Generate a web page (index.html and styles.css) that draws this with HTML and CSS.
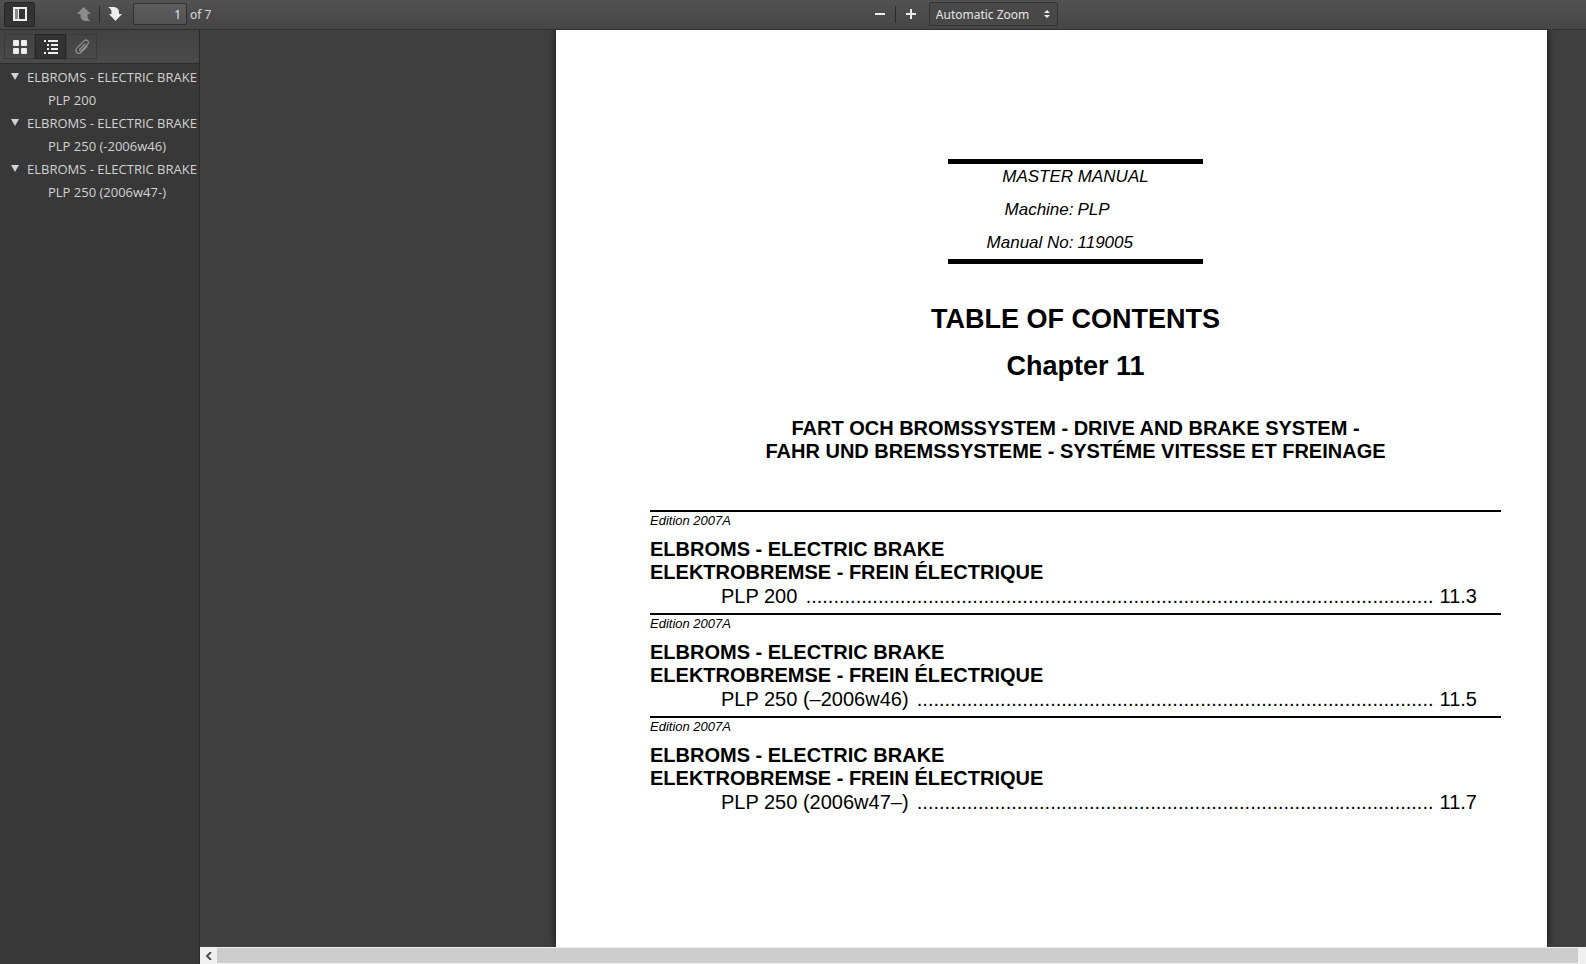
FILE: index.html
```
<!DOCTYPE html>
<html lang="en">
<head>
    <meta charset="UTF-8">
    <meta name="viewport" content="width=device-width, initial-scale=1.0">
    <title>Master Manual - Chapter 11</title>
    <link rel="stylesheet" href="styles.css">
</head>
<body>
    <header class="toolbar">
        <div class="toolbar-left">
            <button class="tool-button toggled sidebar-toggle" aria-label="Toggle Sidebar">
                <svg width="16" height="16" viewBox="0 0 16 16"><path fill="#eee" fill-rule="evenodd" d="M1 1h14v14H1zM3 3v10h3V3zM7 3v10h6V3z"/><path fill="#8a8a8a" d="M3 3h3v10H3z"/></svg>
            </button>
            <div class="page-buttons">
                <button class="plain-button" aria-label="Previous Page" disabled>
                    <svg width="16" height="16" viewBox="0 0 16 16"><path fill="#8c8c8c" d="M7.5 1L15 8h-3.500v2q0 3.500 3.500 5H9q-4.500-1-4.500-5V8H1z"/></svg>
                </button>
                <span class="separator"></span>
                <button class="plain-button" aria-label="Next Page">
                    <svg width="16" height="16" viewBox="0 0 16 16"><path fill="#eee" d="M8.5 15L15 8h-3V6q0-4-4.500-5H1q3.500 1.500 3.500 5v2H2z"/></svg>
                </button>
            </div>
            <input class="page-number" id="page-number" type="text" value="1" aria-label="Page">
            <label class="page-count" for="page-number">of 7</label>
        </div>
        <div class="toolbar-middle">
            <button class="plain-button" aria-label="Zoom Out">
                <svg width="16" height="16" viewBox="0 0 16 16"><path fill="#eee" d="M3 7h10v2H3z"/></svg>
            </button>
            <span class="separator"></span>
            <button class="plain-button" aria-label="Zoom In">
                <svg width="16" height="16" viewBox="0 0 16 16"><path fill="#eee" d="M7 3h2v4h4v2H9v4H7V9H3V7h4z"/></svg>
            </button>
            <div class="zoom">
                <select class="zoom-select" aria-label="Zoom">
                    <option>Automatic Zoom</option>
                    <option>Actual Size</option>
                    <option>Page Width</option>
                </select>
                <svg class="zoom-arrows" width="8" height="10" viewBox="0 0 8 10"><path fill="#eee" d="M4 1l3 3H1zM4 9l3-3H1z"/></svg>
            </div>
        </div>
    </header>

    <div class="main">
        <aside class="sidebar">
            <div class="sidebar-toolbar">
                <button class="tool-button" aria-label="Show Thumbnails">
                    <svg width="16" height="16" viewBox="0 0 16 16"><g fill="#eee"><rect x="1" y="1" width="6" height="6" rx="1"/><rect x="9" y="1" width="6" height="6" rx="1"/><rect x="1" y="9" width="6" height="6" rx="1"/><rect x="9" y="9" width="6" height="6" rx="1"/></g></svg>
                </button>
                <button class="tool-button toggled" aria-label="Show Document Outline">
                    <svg width="16" height="16" viewBox="0 0 16 16"><path fill="#eee" d="M1 1h2v2H1zM5 1h10v2H5zM4 5h2v2H4zM8 5h7v2H8zM4 9h2v2H4zM8 9h7v2H8zM1 13h2v2H1zM5 13h10v2H5z"/></svg>
                </button>
                <button class="tool-button" aria-label="Show Attachments" disabled>
                    <svg width="16" height="16" viewBox="0 0 16 16"><path fill="none" stroke="#8c8c8c" stroke-width="1.3" stroke-linecap="round" d="M11 5l-5 5c-1 1.200.4 2.400 1.500 1.400L13.600 5.300c2.300-2.500-1-5.700-3.600-3.400L3 8.900c-3 3.300 1 7.300 4.200 4.400L13 7.500"/></svg>
                </button>
            </div>
            <ul class="outline">
                <li>
                    <a href="#section1" class="parent">ELBROMS - ELECTRIC BRAKE</a>
                    <ul><li><a href="#section1">PLP 200</a></li></ul>
                </li>
                <li>
                    <a href="#section2" class="parent">ELBROMS - ELECTRIC BRAKE</a>
                    <ul><li><a href="#section2">PLP 250 (-2006w46)</a></li></ul>
                </li>
                <li>
                    <a href="#section3" class="parent">ELBROMS - ELECTRIC BRAKE</a>
                    <ul><li><a href="#section3">PLP 250 (2006w47-)</a></li></ul>
                </li>
            </ul>
        </aside>

        <div class="viewer">
            <div class="viewer-content">
                <main class="page">
                    <div class="manual-info">
                        <p class="manual-title">MASTER MANUAL</p>
                        <span class="label">Machine:</span><span>PLP</span>
                        <span class="label">Manual No:</span><span>119005</span>
                    </div>
                    <h1>TABLE OF CONTENTS</h1>
                    <h1>Chapter 11</h1>
                    <h2>FART OCH BROMSSYSTEM - DRIVE AND BRAKE SYSTEM -<br>FAHR UND BREMSSYSTEME - SYSTÉME VITESSE ET FREINAGE</h2>

                    <section class="entry" id="section1">
                        <p class="edition">Edition 2007A</p>
                        <h3>ELBROMS - ELECTRIC BRAKE<br>ELEKTROBREMSE - FREIN ÉLECTRIQUE</h3>
                        <p class="line"><span>PLP 200</span><span class="dots">.................................................................................................................</span><span>11.3</span></p>
                    </section>
                    <section class="entry" id="section2">
                        <p class="edition">Edition 2007A</p>
                        <h3>ELBROMS - ELECTRIC BRAKE<br>ELEKTROBREMSE - FREIN ÉLECTRIQUE</h3>
                        <p class="line"><span>PLP 250 (–2006w46)</span><span class="dots">.............................................................................................</span><span>11.5</span></p>
                    </section>
                    <section class="entry" id="section3">
                        <p class="edition">Edition 2007A</p>
                        <h3>ELBROMS - ELECTRIC BRAKE<br>ELEKTROBREMSE - FREIN ÉLECTRIQUE</h3>
                        <p class="line"><span>PLP 250 (2006w47–)</span><span class="dots">.............................................................................................</span><span>11.7</span></p>
                    </section>
                </main>
            </div>
            <div class="scrollbar">
                <button class="scroll-left" aria-label="Scroll left">
                    <svg width="8" height="8" viewBox="0 0 8 8"><path fill="none" stroke="#505050" stroke-width="2" d="M6 0L2 4l4 4"/></svg>
                </button>
                <div class="scroll-thumb"></div>
            </div>
        </div>
    </div>
</body>
</html>
```
FILE: styles.css
```
* {
    box-sizing: border-box;
}
body {
    margin: 0;
    height: 100vh;
    display: flex;
    flex-direction: column;
    overflow: hidden;
    background-color: #404040;
    font-family: "Noto Sans", "Open Sans", sans-serif;
    font-size: 12px;
    color: #d9d9d9;
}
h1, h2, h3, p, ul {
    margin: 0;
    padding: 0;
}
button {
    padding: 0;
    border: none;
    background: none;
    display: flex;
    align-items: center;
    justify-content: center;
}

/* toolbar */
.toolbar {
    height: 30px;
    flex-shrink: 0;
    display: grid;
    grid-template-columns: 62fr auto 38fr;
    background: linear-gradient(#525252, #454545);
    position: relative;
    z-index: 2;
    border-bottom: 1px solid #2f2f2f;
}
.toolbar-left, .toolbar-middle {
    display: flex;
    align-items: center;
    padding-bottom: 1px;
}
.toolbar-left {
    padding-left: 4px;
}
.toolbar-middle {
    padding-left: 3px;
}
.tool-button {
    width: 31px;
    height: 25px;
    border: 1px solid #3a3a3a;
}
.toggled {
    background-color: #333;
    border-color: #262626;
}
.sidebar-toggle {
    border-radius: 2px;
}
.page-buttons {
    display: flex;
    align-items: center;
    margin-left: 34px;
}
.plain-button {
    width: 30px;
    height: 25px;
}
.separator {
    width: 1px;
    height: 17px;
    background-color: #2a2a2a;
}
.page-number {
    width: 54px;
    height: 22px;
    margin-left: 3px;
    padding: 0 5px;
    border: 1px solid #303030;
    border-radius: 2px;
    background: linear-gradient(#5c5c5c, #535353);
    color: #e6e6e6;
    font: inherit;
    text-align: right;
}
.page-count {
    margin-left: 3px;
}
.zoom {
    position: relative;
    margin-left: 3px;
}
.zoom-select {
    appearance: none;
    display: block;
    width: 129px;
    height: 24px;
    padding: 0 6px;
    border: 1px solid #323232;
    border-radius: 2px;
    background-color: #484848;
    color: #e6e6e6;
    font: inherit;
}
.zoom-arrows {
    position: absolute;
    right: 7px;
    top: 7px;
    pointer-events: none;
}

/* sidebar */
.main {
    flex: 1;
    min-height: 0;
    display: flex;
}
.sidebar {
    width: 200px;
    flex-shrink: 0;
    background-color: #383838;
    border-right: 1px solid #2a2a2a;
}
.sidebar-toolbar {
    height: 34px;
    display: flex;
    align-items: center;
    padding-left: 4px;
    background: linear-gradient(#424242, #4a4a4a);
    border-bottom: 1px solid #2c2c2c;
}
.outline {
    padding-top: 1px;
    font-family: "Open Sans", "Noto Sans", sans-serif;
    font-size: 13px;
}
.outline, .outline ul {
    list-style: none;
}
.outline a {
    display: flex;
    align-items: center;
    height: 23px;
    padding-left: 48px;
    color: #d2d2d2;
    text-decoration: none;
    white-space: nowrap;
}
.outline .parent {
    padding-left: 11px;
}
.parent::before {
    content: "";
    margin-right: 8px;
    border: solid transparent;
    border-width: 7px 4px 0;
    border-top-color: #d2d2d2;
}

/* document */
.viewer {
    flex: 1;
    min-width: 0;
    display: flex;
    flex-direction: column;
}
.viewer-content {
    flex: 1;
    min-height: 0;
    overflow: hidden;
    padding: 0 39px 0 356px;
}
.page {
    min-height: 100%;
    padding: 129px 46px 0 94px;
    background-color: #fff;
    box-shadow: 0 0 8px #111;
    color: #000;
    font-family: "Liberation Sans", Arial, sans-serif;
    font-size: 20px;
    line-height: 23px;
}
.manual-info {
    width: 255px;
    margin: 0 auto 40px;
    padding-bottom: 4px;
    display: grid;
    grid-template-columns: 1fr 1fr;
    gap: 8px 4px;
    border-top: 5px solid #000;
    border-bottom: 5px solid #000;
    font-size: 17px;
    font-style: italic;
    line-height: 25px;
}
.manual-title {
    grid-column: 1 / 3;
    text-align: center;
}
.label {
    text-align: right;
}
h1 {
    font-size: 27px;
    line-height: 30px;
    text-align: center;
}
h1 + h1 {
    margin-top: 17px;
}
h2 {
    margin: 36px 0 47px;
    font-size: 20px;
    text-align: center;
}
h3 {
    margin: 10px 0 1px;
    font-size: 20px;
}
.entry {
    border-top: 2px solid #000;
    padding: 1px 0 5px;
}
.edition {
    font-size: 13px;
    font-style: italic;
    line-height: 15px;
}
.line {
    display: flex;
    padding: 0 24px 0 71px;
}
.dots {
    flex: 1;
    min-width: 0;
    margin: 0 6px 0 8px;
    overflow: hidden;
    white-space: nowrap;
    text-align: right;
}

/* scrollbar */
.scrollbar {
    height: 17px;
    display: flex;
    padding: 1px 8px 1px 0;
    background-color: #f0f0f0;
}
.scroll-left {
    width: 17px;
}
.scroll-thumb {
    flex: 1;
    background-color: #cdcdcd;
}
```
